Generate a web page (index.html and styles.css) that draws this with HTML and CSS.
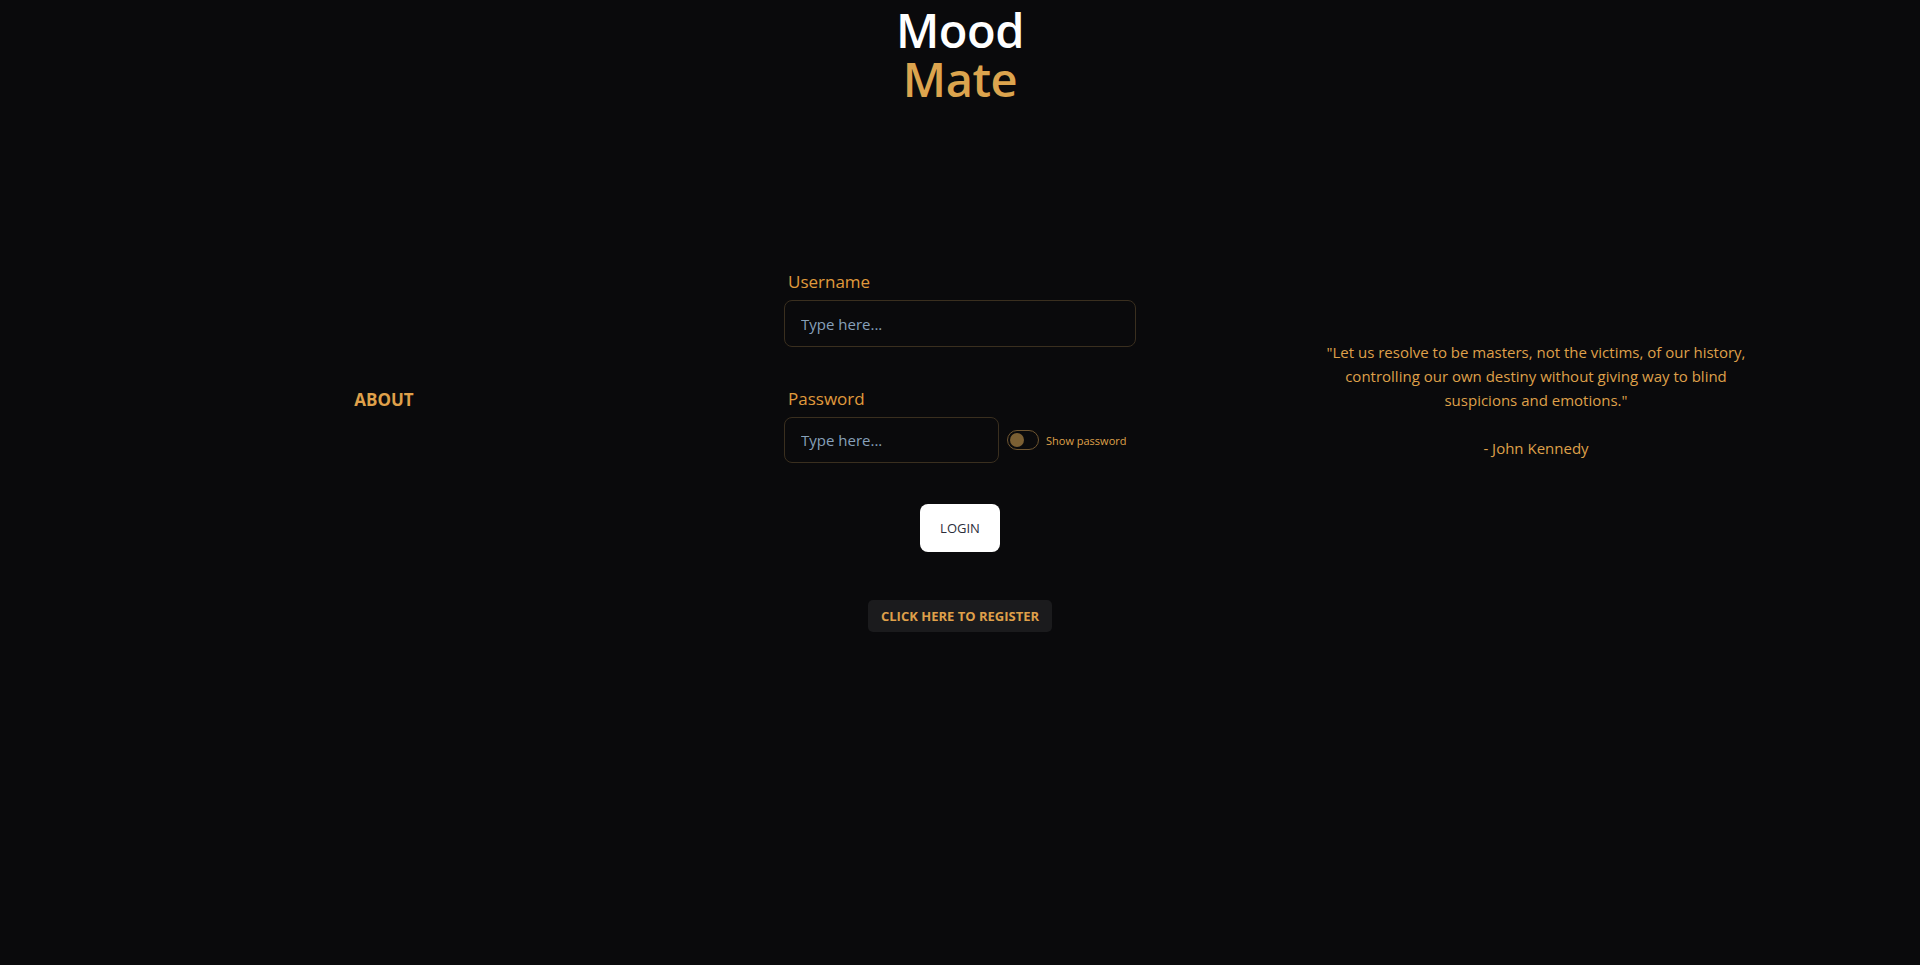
FILE: index.html
```html
<!DOCTYPE html>
<html lang="en">
<head>
<meta charset="utf-8">
<title>MoodMate - Login</title>
<link rel="stylesheet" href="styles.css">
</head>
<body>
<header class="brand">
  <h1 class="logo"><span class="logo-mood">Mood</span><span class="logo-mate">Mate</span></h1>
</header>
<main class="layout">
  <section class="side side-about">
    <a class="about-link" href="#">ABOUT</a>
  </section>
  <section class="center">
    <form class="login-form">
      <label class="field-label" for="username">Username</label>
      <input class="field-input" id="username" type="text" placeholder="Type here...">
      <label class="field-label field-label-pw" for="password">Password</label>
      <div class="pw-row">
        <input class="field-input field-input-pw" id="password" type="password" placeholder="Type here...">
        <label class="toggle-wrap">
          <span class="toggle"><span class="toggle-knob"></span></span>
          <span class="toggle-text">Show password</span>
        </label>
      </div>
      <button class="btn-login" type="button">LOGIN</button>
      <button class="btn-register" type="button">CLICK HERE TO REGISTER</button>
    </form>
  </section>
  <section class="side side-quote">
    <blockquote class="quote">
      <p class="quote-text">"Let us resolve to be masters, not the victims, of our history, controlling our own destiny without giving way to blind suspicions and emotions."</p>
      <p class="quote-author">- John Kennedy</p>
    </blockquote>
  </section>
</main>
</body>
</html>
```

FILE: styles.css
```css
* { box-sizing: border-box; }

html, body {
  margin: 0;
  padding: 0;
  background: #0a0a0c;
  min-height: 100%;
}

body {
  font-family: "Open Sans", "Noto Sans", sans-serif;
  color: #dfa04a;
  height: 965px;
}

.brand {
  display: flex;
  justify-content: center;
  padding-top: 6px;
}

.logo {
  margin: 0;
  font-size: 47px;
  font-weight: 600;
  line-height: 49px;
  text-align: center;
  letter-spacing: -0.5px;
}

.logo-mood {
  display: block;
  color: #ffffff;
}

.logo-mate {
  display: block;
  color: #dca44e;
}

.layout {
  display: grid;
  grid-template-columns: 2fr 1fr 2fr;
  align-items: start;
}

.side {
  display: flex;
  justify-content: center;
}

.side-about {
  padding-top: 283px;
}

.about-link {
  font-size: 17px;
  font-weight: 700;
  color: #dfa04a;
  text-decoration: none;
  line-height: 25px;
}

.side-quote {
  padding-top: 236px;
}

.quote {
  margin: 0;
  width: 440px;
  text-align: center;
  font-size: 15px;
  line-height: 24px;
  color: #dfa04a;
}

.quote-text {
  margin: 0 0 24px;
}

.quote-author {
  margin: 0;
}

.center {
  padding: 165px 16px 0;
}

.login-form {
  display: flex;
  flex-direction: column;
  align-items: center;
}

.field-label {
  align-self: stretch;
  padding-left: 4px;
  font-size: 17px;
  line-height: 25px;
  color: #e09a3c;
}

.field-label-pw {
  margin-top: 39px;
}

.field-input {
  align-self: stretch;
  margin-top: 6px;
  height: 47px;
  padding: 0 16px;
  background: #0a0a0c;
  border: 1px solid #3a2f1f;
  border-radius: 8px;
  font-family: inherit;
  font-size: 15px;
  color: #cfd6de;
  outline: none;
}

.field-input::placeholder {
  color: #87a0ba;
}

.pw-row {
  align-self: stretch;
  display: flex;
  align-items: center;
  gap: 8px;
  margin-top: 6px;
}

.field-input-pw {
  margin-top: 0;
  width: 215px;
  height: 46px;
  flex: none;
}

.toggle-wrap {
  display: flex;
  align-items: center;
  gap: 7px;
}

.toggle {
  display: flex;
  align-items: center;
  width: 32px;
  height: 20px;
  padding: 0 2px;
  border: 1px solid #6f5530;
  border-radius: 10px;
}

.toggle-knob {
  width: 14px;
  height: 14px;
  border-radius: 50%;
  background: #7b5f33;
}

.toggle-text {
  font-size: 11px;
  color: #dfa04a;
  white-space: nowrap;
}

.btn-login {
  margin-top: 41px;
  width: 80px;
  height: 48px;
  background: #ffffff;
  border: none;
  border-radius: 8px;
  font-family: inherit;
  font-size: 13px;
  color: #2b2d3a;
  cursor: pointer;
}

.btn-register {
  margin-top: 48px;
  height: 32px;
  padding: 0 13px;
  background: #1b1b1d;
  border: none;
  border-radius: 5px;
  font-family: inherit;
  font-size: 13px;
  font-weight: 700;
  color: #dfa04a;
  cursor: pointer;
}
```
